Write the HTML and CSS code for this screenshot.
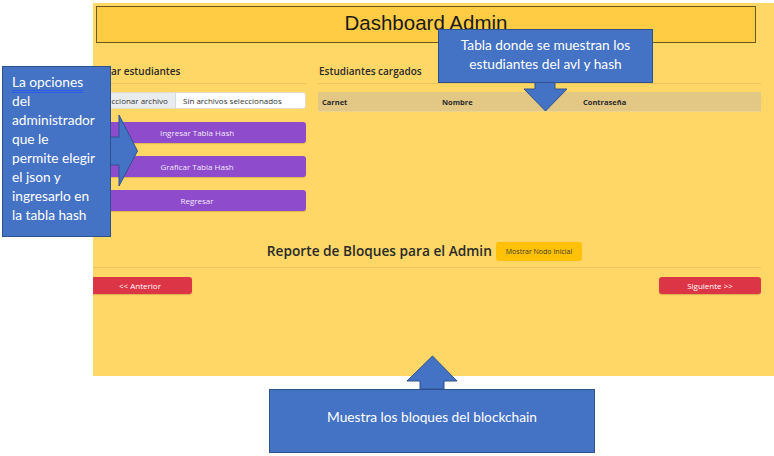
FILE: index.html
```html
<!DOCTYPE html>
<html lang="es">
<head>
<meta charset="utf-8">
<title>Dashboard Admin</title>
<link rel="stylesheet" href="styles.css">
</head>
<body>
<div class="shot">
  <div class="title">Dashboard Admin</div>
  <div class="page">
    <div class="cols">
      <div class="col-left">
        <h5 class="sec-title">Cargar estudiantes</h5>
        <div class="file"><span class="file-btn">Seleccionar archivo</span><span class="file-name">Sin archivos seleccionados</span></div>
        <button class="btn purple">Ingresar Tabla Hash</button>
        <button class="btn purple">Graficar Tabla Hash</button>
        <button class="btn purple">Regresar</button>
      </div>
      <div class="col-right">
        <h5 class="sec-title">Estudiantes cargados</h5>
        <table class="tbl">
          <thead><tr><th class="c1">Carnet</th><th class="c2">Nombre</th><th>Contraseña</th></tr></thead>
        </table>
      </div>
    </div>
    <div class="report">
      <h4 class="report-title">Reporte de Bloques para el Admin</h4>
      <span class="badge">Mostrar Nodo Inicial</span>
    </div>
    <div class="nav">
      <button class="btn red prev">&lt;&lt; Anterior</button>
      <button class="btn red next">Siguiente &gt;&gt;</button>
    </div>
  </div>
</div>

<svg class="arrows" width="774" height="456" viewBox="0 0 774 456">
  <polygon points="110,137 119,137 119,115 137.5,151 119,186 119,165 110,165" fill="#4472C4" stroke="#2F528F" stroke-width="1"/>
  <polygon points="535,82 555,82 555,89 567,89 545.5,111 524,89 535,89" fill="#4472C4" stroke="#2F528F" stroke-width="1"/>
  <polygon points="420,389 420,381 407,381 432.5,356 457,381 444,381 444,389" fill="#4472C4" stroke="#2F528F" stroke-width="1"/>
</svg>

<div class="callout c-left"><span class="spell">La opciones</span><br>del<br>administrador<br>que le<br>permite elegir<br>el json y<br>ingresarlo en<br>la tabla hash</div>
<div class="callout c-top">Tabla donde se muestran los<br>estudiantes del avl y hash</div>
<div class="callout c-bottom">Muestra los bloques del blockchain</div>
</body>
</html>
```
FILE: styles.css
```css
html, body {
  margin: 0;
}
body {
  width: 774px;
  height: 456px;
  box-sizing: border-box;
  padding: 3px 0 0 93px;
  position: relative;
  background: #ffffff;
  overflow: hidden;
  font-family: "Open Sans", "Noto Sans", sans-serif;
}
.shot {
  width: 681px;
  height: 373px;
  background: #FFD766;
  overflow: hidden;
}
.title {
  margin: 3px 18px 0 3px;
  height: 37px;
  box-sizing: border-box;
  border: 1px solid #6b5a1e;
  background: #FFCC44;
  display: flex;
  align-items: center;
  justify-content: center;
  padding-bottom: 3px;
  font-family: "Liberation Sans", Arial, sans-serif;
  font-size: 20.5px;
  color: #1a1a1a;
}
.page {
  margin-left: -5px;
  padding-right: 13px;
}
.cols {
  display: flex;
  gap: 12px;
  margin-top: 21px;
}
.col-left {
  width: 218px;
}
.col-right {
  flex: 1;
}
.sec-title {
  margin: 0;
  font-size: 10px;
  font-weight: 600;
  line-height: 14px;
  padding-bottom: 5px;
  border-bottom: 1px solid #E9C45C;
  color: #2a2a2a;
}
.col-left .sec-title {
  padding-left: 1px;
}
.col-right .sec-title {
  padding-left: 1px;
}
.file {
  margin-top: 8px;
  height: 17px;
  box-sizing: border-box;
  display: flex;
  border: 1px solid #e6dcc4;
  border-radius: 3px;
  background: #fff;
  font-size: 8px;
  line-height: 15px;
  color: #333;
  overflow: hidden;
}
.file-btn {
  width: 86px;
  flex: none;
  text-align: center;
  background: #E9ECEF;
  border-right: 1px solid #d6d9dc;
}
.file-name {
  padding-left: 7px;
}
.btn {
  display: block;
  border: 0;
  padding: 0;
  border-radius: 3px;
  font-family: "Open Sans", "Noto Sans", sans-serif;
  font-size: 8px;
  color: #fff;
}
.purple {
  width: 100%;
  height: 21px;
  margin-top: 13px;
  background: #8E4BCB;
  color: #f1e9fb;
  box-shadow: 0 1px 1px rgba(120, 80, 20, 0.25);
}
.tbl {
  margin-top: 8px;
  width: 100%;
  border-collapse: collapse;
}
.tbl th {
  height: 19px;
  padding: 0 4px;
  text-align: left;
  background: #E2C785;
  border-bottom: 1px solid #EDD58F;
  font-size: 7.5px;
  font-weight: 700;
  color: #2a2a2a;
}
.tbl .c1 { width: 112px; }
.tbl .c2 { width: 133px; }
.report {
  margin-top: 30px;
  display: flex;
  justify-content: center;
  align-items: center;
  gap: 4px;
  padding-bottom: 6px;
  border-bottom: 1px solid #E9C45C;
}
.report-title {
  margin: 0;
  font-size: 13.7px;
  font-weight: 600;
  line-height: 20px;
  color: #2a2a2a;
}
.badge {
  height: 19px;
  line-height: 19px;
  padding: 0 10px;
  background: #FFC107;
  border-radius: 3px;
  font-size: 7px;
  color: #3a3a2a;
}
.nav {
  margin-top: 9px;
  display: flex;
  justify-content: space-between;
}
.red {
  height: 17px;
  background: #DC3545;
  box-shadow: 0 1px 1px rgba(120, 40, 20, 0.25);
}
.prev { width: 104px; }
.next { width: 102px; }

.arrows {
  position: absolute;
  left: 0;
  top: 0;
}
.callout {
  position: absolute;
  box-sizing: border-box;
  background: #4472C4;
  border: 1px solid #2F528F;
  color: #fff;
  font-family: Lato, "Open Sans", sans-serif;
  font-size: 13.7px;
  line-height: 19px;
}
.c-left {
  left: 2px;
  top: 66px;
  width: 109px;
  height: 171px;
  padding: 4.5px 0 0 9px;
}
.spell {
  border-bottom: 3px double #2A5CE6;
}
.c-top {
  left: 438px;
  top: 29px;
  width: 215px;
  height: 54px;
  padding-top: 5px;
  text-align: center;
}
.c-bottom {
  left: 269px;
  top: 389px;
  width: 326px;
  height: 64px;
  padding-top: 17px;
  text-align: center;
}
```
